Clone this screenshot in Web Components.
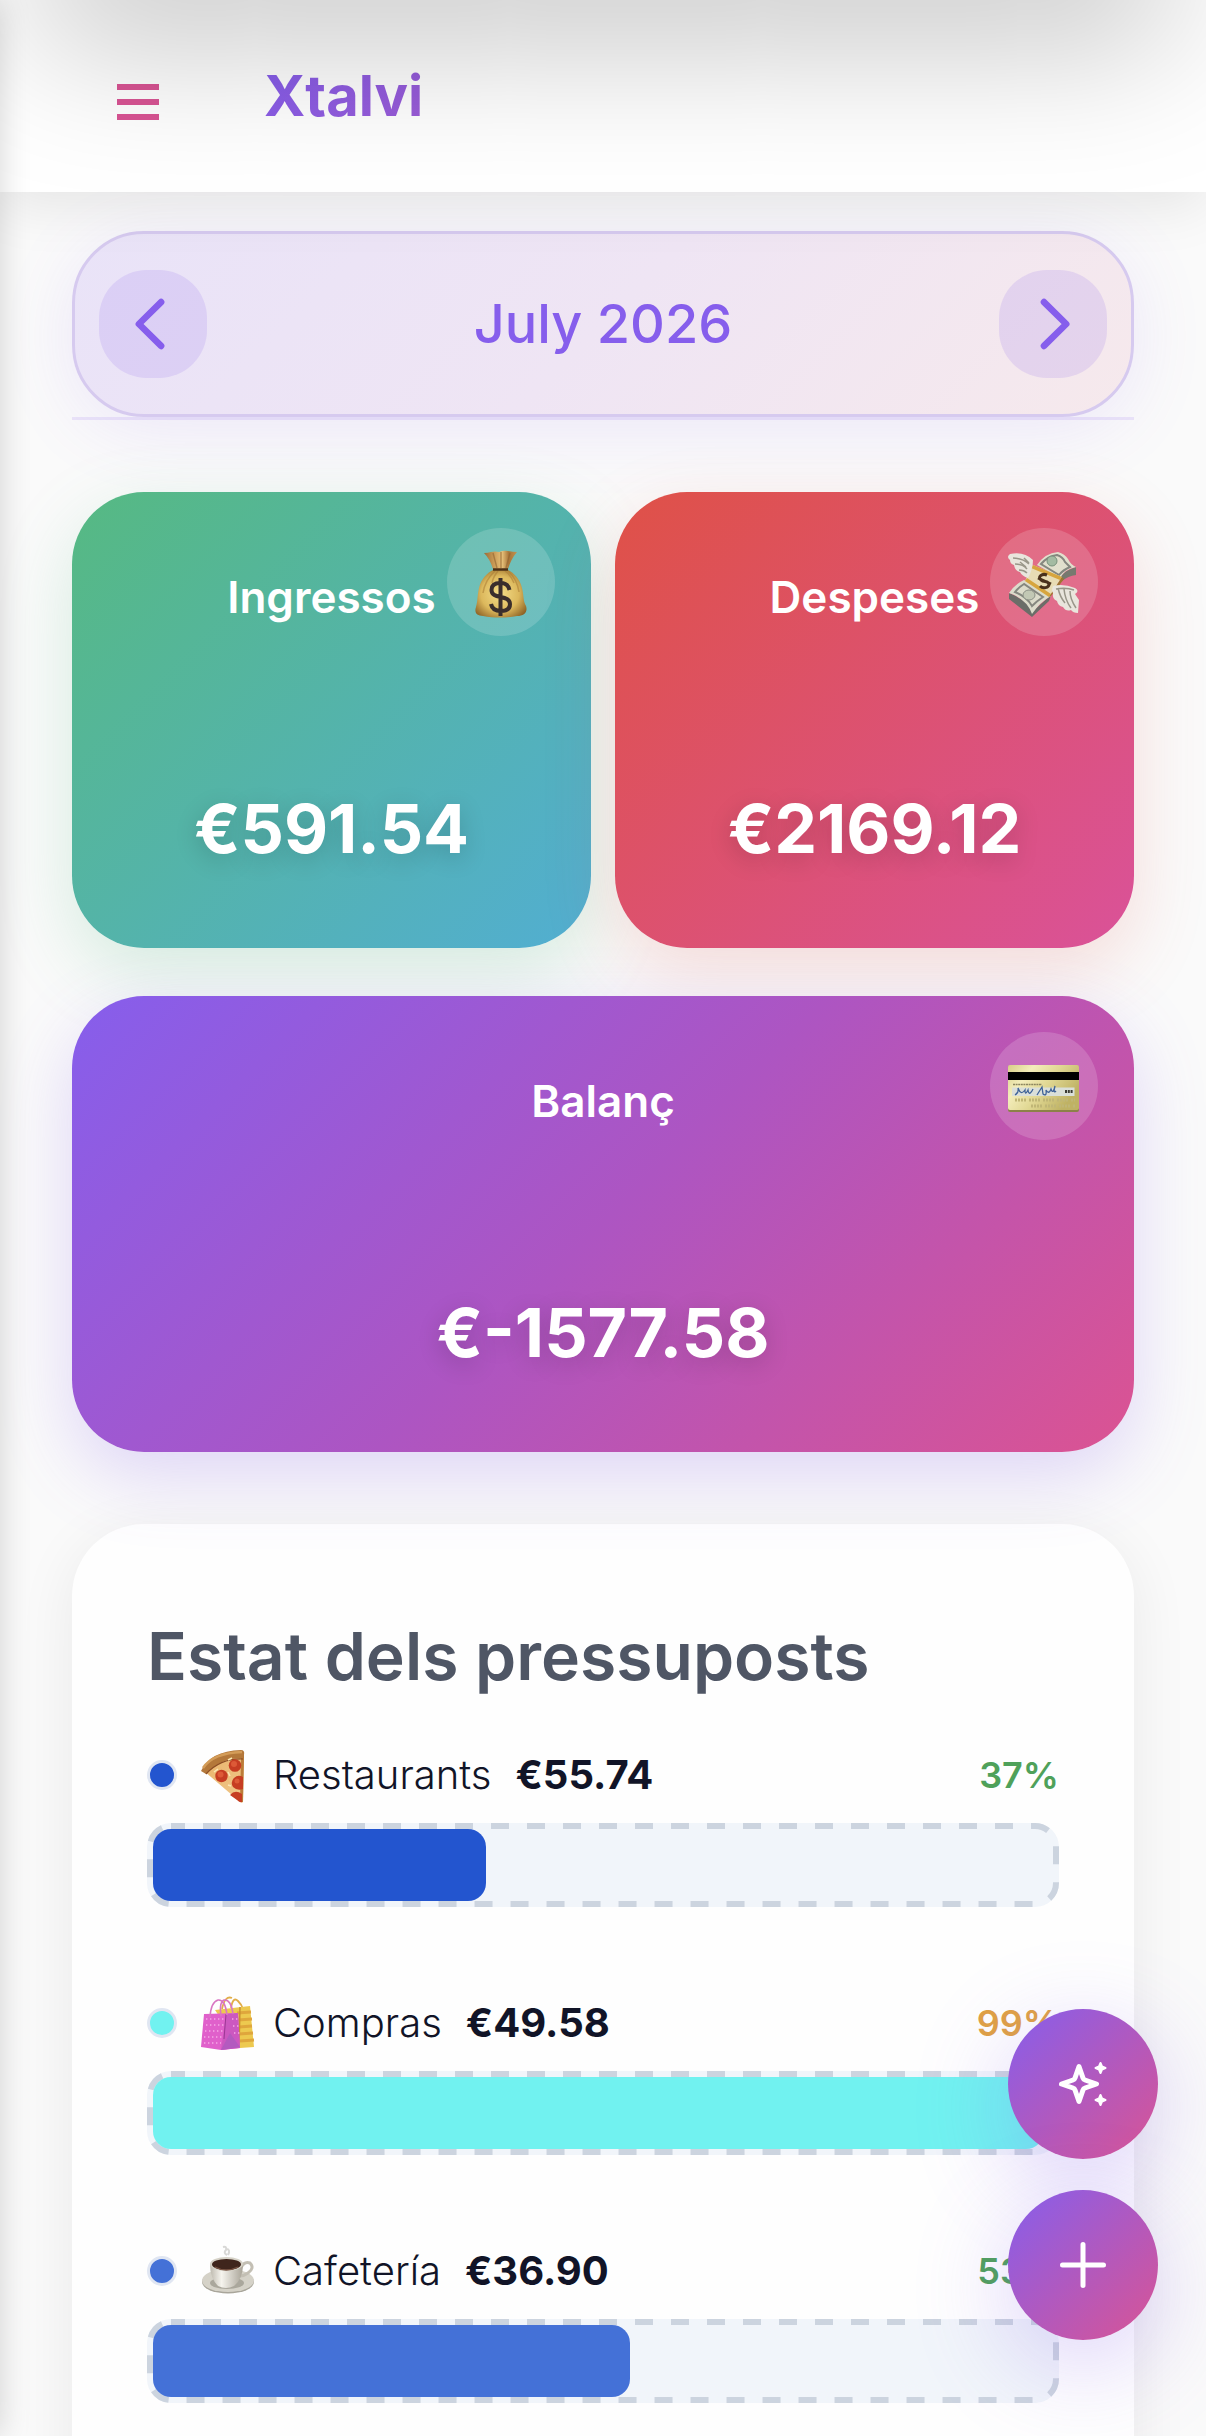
<!DOCTYPE html>
<html lang="ca">
<head>
<meta charset="utf-8">
<meta name="viewport" content="width=device-width, initial-scale=1">
<title>Xtalvi</title>
<style>
  :root {
    --purple: #865eec;
    --pink: #d95494;
    --brand: linear-gradient(135deg, #865eec, #d95494);
    --edge: 72px;
    --radius: 72px;
  }
  html, body { margin: 0; height: 100%; overflow: hidden; background: #fafafa; }
  body { font-family: Inter, "Liberation Sans", sans-serif; color: #111427; }
</style>
</head>
<body>
<app-shell>
  <app-header slot="header">Xtalvi</app-header>
  <month-nav>July 2026</month-nav>
  <summary-grid>
    <summary-card tone="income" icon="bag" label="Ingressos">€591.54</summary-card>
    <summary-card tone="expense" icon="wings" label="Despeses">€2169.12</summary-card>
    <summary-card tone="balance" icon="card" label="Balanç">€-1577.58</summary-card>
  </summary-grid>
  <budget-panel heading="Estat dels pressuposts">
    <budget-row icon="pizza" name="Restaurants" amount="€55.74" percent="37" fill="#2355cf"></budget-row>
    <budget-row icon="shopping" name="Compras" amount="€49.58" percent="99" fill="#71f2f0" warn></budget-row>
    <budget-row icon="coffee" name="Cafetería" amount="€36.90" percent="53" fill="#4471d7"></budget-row>
  </budget-panel>
  <fab-stack slot="actions"></fab-stack>
</app-shell>

<script>
const define = (name, render) => customElements.define(name, class extends HTMLElement {
  connectedCallback() {
    if (this.shadowRoot) return;
    const t = document.createElement('template');
    t.innerHTML = render(this);
    this.attachShadow({ mode: 'open' }).append(t.content.cloneNode(true));
  }
});

const ICONS = {
  bag: `<svg viewBox="0 0 108 108">
    <defs>
      <radialGradient id="b" cx=".48" cy=".5" r=".62"><stop offset="0" stop-color="#f3dc87"/><stop offset=".6" stop-color="#dcb85c"/><stop offset="1" stop-color="#8f6426"/></radialGradient>
      <linearGradient id="n"><stop offset="0" stop-color="#9a6b35"/><stop offset=".3" stop-color="#c99a55"/><stop offset=".55" stop-color="#e6c079"/><stop offset=".75" stop-color="#a87538"/><stop offset="1" stop-color="#c3934f"/></linearGradient>
    </defs>
    <path d="M37 25q4 0 7-1 4-1 8 0 5-2 9-1 5 1 9 1-6 7-9 17H46q-3-10-9-16z" fill="url(#n)"/>
    <path d="M46 25l4 15M54 24v16M63 25l-4 15" stroke="#8f6230" stroke-width="1.4" fill="none" opacity=".6"/>
    <path d="M46 42h15c6 3 12 9 14 18 2 8 1 13 4 18 2 6-2 10-9 10-11 2-23 2-34 0-6 0-9-3-7-9 2-7 1-10 3-19 2-9 8-15 14-18z" fill="url(#b)"/>
    <path d="M48 43q-10 9-12 22M51 43q-5 6-6 12M58 43q6 4 9 12M61 43q9 8 11 21" stroke="#a97b35" stroke-width="1.5" fill="none" opacity=".55"/>
    <path d="M46 41.500h15" stroke="#4c3017" stroke-width="2.500"/>
    <path d="M62.500 62c-1-5-4-7-9-7s-9 2-9 7c0 10 18 4 18.500 14 0 5-4 7-9 7s-9-2-10-7M53.500 50v38" fill="none" stroke="#3a2e2c" stroke-width="4"/>
  </svg>`,
  wings: `<svg viewBox="0 0 108 108">
    <path d="M19 65q20 8 23 19l19-17-2 6-17 16-23-18z" fill="#6b6d68"/>
    <path d="M34 52q-9 4-15 13 18 6 23 21 8-12 19-18z" fill="#dcdccb"/>
    <path d="M34 56q-5 3-9 8 12 5 17 14 5-5 11-9z" fill="none" stroke="#85877f" stroke-width="2"/>
    <ellipse cx="39" cy="67" rx="6" ry="5" fill="#c2c8b4" stroke="#8b9085"/>
    <path d="M86 39q-10 3-15 9l1 5q6-5 14-6z" fill="#77796f"/>
    <path d="M47 37q8-12 21-13 7 2 10 7 3 6 8 8-11 2-16 11z" fill="#e1e0cd"/>
    <path d="M51 36q7-8 16-9 6 2 8 7l5 5q-7 3-11 8z" fill="none" stroke="#85877f" stroke-width="2"/>
    <circle cx="62" cy="33" r="5" fill="#a3bba2" stroke="#78917b"/>
    <path d="M43 37l29 12-13 20-24-16z" fill="#e8dcb4"/>
    <path d="M43 37l29 12-2 3-29-12zM37 50l24 16-2 3-24-16z" fill="#d7a53e"/>
    <path d="M72 49l-13 20 2-1 13-17z" fill="#9c772e"/>
    <path d="M57 47c-5-2-10 2-6 5 3 3 6 0 8 4 0 4-6 5-9 2M48 50l13 6" fill="none" stroke="#49311c" stroke-width="3"/>
    <path d="M20 26q14-3 23 6 0 9-5 18-6-2-8-6-5-1-6-7-4-1-4-5-4-3 0-6z" fill="#e9e6dd"/>
    <path d="M23 30q10 0 16 6M25 36q8 0 12 5M29 42q5 0 8 3M34 30l5 5M30 34l6 5" fill="none" stroke="#999689" stroke-width="1.500"/>
    <path d="M63 58q10-3 22 2 5 3 0 6l4 6-1 13q-5 0-7-3-5 2-8-3-5-1-6-6-5-2-4-8-2-2 0-7z" fill="#e9e6dd"/>
    <path d="M68 60q2 9 7 15M74 61q1 11 7 19M80 63q0 8 6 17M66 61q10-2 18 1" fill="none" stroke="#999689" stroke-width="1.500"/>
  </svg>`,
  card: `<svg viewBox="0 0 108 108">
    <defs><linearGradient id="c" x2="1" y2=".5"><stop offset="0" stop-color="#d8cf88"/><stop offset=".3" stop-color="#f4edbb"/><stop offset=".6" stop-color="#e1d894"/><stop offset="1" stop-color="#bfb264"/></linearGradient></defs>
    <rect x="18" y="34" width="71" height="46" rx="2" fill="#8c8148"/>
    <rect x="18" y="33" width="71" height="45" rx="2" fill="url(#c)"/>
    <path fill="#000" d="M18 40h71v8H18z"/>
    <path fill="#dadfd9" d="M22 55.500h62.500v8.500H22z"/>
    <path d="M23 52.500h29" stroke="#8d8660" stroke-width="1.500" stroke-dasharray="2 .6"/>
    <path d="M25 63q4-2 3-7 3 8 7 2 0 6 3 0 1 7 5-1M47 63l5-8 1 7q4 3 3-4 3 5 5-1 2 6 4-3-2 8 1 5" fill="none" stroke="#3f6398" stroke-width="1.300"/>
    <path d="M75 59.500h8" stroke="#3b3b35" stroke-width="3" stroke-dasharray="2 .8"/>
    <path d="M25 68h60M41 74h44" stroke="#c0b676" stroke-width="3" stroke-dasharray="2 1 2 1 2 1 2 3"/>
  </svg>`,
  pizza: `<svg viewBox="0 0 54 60">
    <defs><linearGradient id="z" x1="0" y1="0" x2="1" y2="1"><stop offset="0" stop-color="#e9b36a"/><stop offset="1" stop-color="#f0c98c"/></linearGradient></defs>
    <path d="M3 26Q20 11 43 11l-1 46q-1 2-4-1z" fill="url(#z)"/>
    <path d="M40 13h3l-1 44-3 0z" fill="#bb7c38"/>
    <path d="M0 26Q9 6 40 5q4 0 3 5v3Q20 12 5 29z" fill="#b4783a"/>
    <path d="M2 23Q12 8 41 7" fill="none" stroke="#d39c58" stroke-width="2.500"/>
    <path d="M5 29Q20 13 42 14" fill="none" stroke="#8c4d24" stroke-width="1.200"/>
    <g fill="#c63d22"><circle cx="34" cy="20.500" r="6.300"/><circle cx="20.500" cy="31" r="6.200"/><path d="M42 32v12q-6 2-10-2-3-5 1-9 4-4 9-1zM41 49v8q-2 1-5-2l-7-5q5-6 12-1z"/></g>
    <g fill="#dd5a37"><circle cx="33" cy="19" r="3"/><circle cx="19.500" cy="29.500" r="3"/><circle cx="36" cy="36" r="2.500"/></g>
    <path d="M13 27l4-3M27 27l2 4M27 40l3 1M31 13l-4 2" stroke="#fbe6b4" stroke-width="1.500"/>
  </svg>`,
  shopping: `<svg viewBox="0 0 54 60">
    <path d="M21 16Q24 2 31 5M30 15Q32 3 37 8q4 4 5 8" fill="none" stroke="#e2ae49" stroke-width="1.800"/>
    <path d="M14 17l35-4 4 41-14 1z" fill="#edc94f"/>
    <path d="M36 20l14-1M37 27l14-1M38 34l13-1M38 41l14-1M39 48l14-1" stroke="#dfa63c" stroke-width="3"/>
    <path d="M39 14l-1 40" stroke="#c89030" stroke-width="1.500"/>
    <path d="M3 21l34-1 2 35-19 2-20-3z" fill="#e060cb"/>
    <path d="M25 21l12-1 2 35-19 2z" fill="#cc58c0"/>
    <path d="M29 40l10 14-19 3z" fill="#b35abf"/>
    <path d="M25 21l-2 25" stroke="#9c3794"/>
    <path d="M5 26h18M5 32h18M4 38h18M3 44h18M3 50h17M31 26h7M32 33h6M33 40h6" stroke="#f3a9e6" stroke-width="1.400" stroke-dasharray="1.400 2.600"/>
    <path d="M9 24Q10 9 17 7q7-1 9 15M20 23Q18 9 23 7q7-1 9 14" fill="none" stroke="#d977c2" stroke-width="1.600"/>
  </svg>`,
  coffee: `<svg viewBox="0 0 54 60">
    <defs><linearGradient id="s"><stop offset="0" stop-color="#bdb9ae"/><stop offset=".35" stop-color="#f6f4ee"/><stop offset="1" stop-color="#a9a498"/></linearGradient></defs>
    <ellipse cx="27" cy="41" rx="26" ry="11.500" fill="#a9a69b"/>
    <ellipse cx="27" cy="39.500" rx="26" ry="11.500" fill="#d5d2c8"/>
    <ellipse cx="26" cy="42" rx="17" ry="6" fill="#aaa79c"/>
    <path d="M40 27q3-7 9-5 5 5-2 10-4 3-8 3" fill="none" stroke="#c3bfb4" stroke-width="3"/>
    <path d="M9 23h33q0 15-9 22-8 4-16 0-8-8-8-22z" fill="url(#s)"/>
    <ellipse cx="25.500" cy="23" rx="16.500" ry="7" fill="#d6d2c7"/>
    <ellipse cx="25.500" cy="23.500" rx="14.500" ry="5.500" fill="#3f251c"/>
    <path d="M14 26q11 6 23 0" fill="none" stroke="#795444" stroke-width="1.300"/>
    <path d="M22 6q4-1 3 3-3 3 1 5M25 8q5 0 2 6" fill="none" stroke="#c8c8c4" stroke-width="2" opacity=".7"/>
  </svg>`
};

/* Page frame: the closed drawer and the sheet above cast shadows over the content. */
define('app-shell', () => `
<style>
  :host { display: flex; flex-direction: column; height: 100vh; position: relative; overflow: hidden; }
  main { flex: 1; min-height: 0; overflow: hidden; padding: 39px var(--edge) 0; display: flex; flex-direction: column; gap: 72px; }
  .shade { position: absolute; z-index: 5; pointer-events: none; }
  .drawer { left: -100px; top: 0; bottom: 0; width: 100px; box-shadow: 0 0 30px rgba(0,0,0,.16); }
  .sheet { left: 0; right: 0; top: -200px; height: 200px; box-shadow: 0 75px 150px -36px rgba(0,0,0,.25); }
</style>
<slot name="header"></slot>
<main><slot></slot></main>
<div class="shade drawer"></div><div class="shade sheet"></div>
<slot name="actions"></slot>`);

define('app-header', () => `
<style>
  :host { display: block; position: relative; z-index: 2; background: #fff; box-shadow: 0 12px 54px rgba(0,0,0,.09); }
  header { display: flex; align-items: center; gap: 105px; padding: 60px 117px; }
  button { all: unset; display: block; cursor: pointer; height: 48px; }
  svg { display: block; width: 42px; height: 48px; }
  h1 { flex: 1; margin: 0; font-size: 56px; line-height: 72px; font-weight: 700; color: transparent;
       background: var(--brand); background-clip: text; -webkit-background-clip: text; }
</style>
<header>
  <button type="button" aria-label="Menú"><svg viewBox="0 0 42 48" fill="#d95494"><path d="M0 12h42v6H0zM0 27h42v6H0zM0 42h42v6H0z"/></svg></button>
  <h1><slot></slot></h1>
</header>`);

define('month-nav', () => `
<style>
  :host { display: block; border-bottom: 3px solid #ebe5f8; }
  nav { display: flex; align-items: center; justify-content: space-between; padding: 36px 24px; border: 3px solid #d6caef;
        border-radius: var(--radius); background: linear-gradient(135deg, #e9e3f8, #efe5f4 50%, #f6e9ec);
        box-shadow: 0 12px 72px rgba(134,94,236,.12); color: var(--purple); }
  button { all: unset; box-sizing: border-box; width: 108px; height: 108px; padding: 18px; border-radius: 48px; background: rgba(134,94,236,.15); cursor: pointer; }
  svg { display: block; width: 72px; height: 72px; fill: none; stroke: currentColor; stroke-width: 2.2; stroke-linecap: round; stroke-linejoin: round; }
  h2 { margin: 0; font-size: 54px; line-height: 72px; font-weight: 500; }
</style>
<nav>
  <button type="button" aria-label="Mes anterior"><svg viewBox="0 0 24 24"><path d="M14.700 4.700 7.300 12l7.400 7.300"/></svg></button>
  <h2><slot></slot></h2>
  <button type="button" aria-label="Mes següent"><svg viewBox="0 0 24 24"><path d="M9 4.700 16.400 12 9 19.300"/></svg></button>
</nav>`);

define('summary-grid', () => `
<style>:host { display: grid; grid-template-columns: 1fr 1fr; gap: 48px 24px; }</style><slot></slot>`);

define('summary-card', el => `
<style>
  :host { display: block; position: relative; border-radius: var(--radius); color: #fff; }
  :host([tone=income]) { background: linear-gradient(135deg, #56b982, #52aed2); box-shadow: 0 24px 72px rgba(86,185,130,.22); }
  :host([tone=expense]) { background: linear-gradient(135deg, #df5147, #da5299); box-shadow: 0 24px 72px rgba(223,81,71,.18); }
  :host([tone=balance]) { grid-column: 1 / -1; background: linear-gradient(135deg, #865eec, #ad55c2 50%, #db5392); box-shadow: 0 24px 72px rgba(134,94,236,.23); }
  article { display: flex; flex-direction: column; align-items: center; gap: 150px; padding: 72px; }
  h3 { margin: 0; font-size: 44px; line-height: 66px; font-weight: 600; }
  p { margin: 0; font-size: 68px; line-height: 96px; font-weight: 700; text-shadow: 0 6px 24px rgba(0,0,0,.18); }
  .badge { position: absolute; top: 36px; right: 36px; width: 108px; height: 108px; border-radius: 50%; background: rgba(255,255,255,.16); }
  svg { display: block; width: 100%; height: 100%; }
</style>
<article><h3>${el.getAttribute('label')}</h3><p><slot></slot></p></article>
<div class="badge" aria-hidden="true">${ICONS[el.getAttribute('icon')]}</div>`);

define('budget-panel', el => `
<style>
  :host { display: block; flex: none; box-sizing: border-box; padding: 75px 75px 160px; border-radius: var(--radius); background: #fefefe; box-shadow: 0 12px 60px rgba(0,0,0,.07); }
  h2 { margin: 0 0 32px; font-size: 66px; line-height: 114px; font-weight: 600; color: #4f5665; }
  .rows { display: flex; flex-direction: column; gap: 86px; }
</style>
<h2>${el.getAttribute('heading')}</h2><div class="rows"><slot></slot></div>`);

define('budget-row', el => {
  const a = n => el.getAttribute(n);
  return `
<style>
  :host { display: flex; flex-direction: column; gap: 18px; }
  .info { display: flex; align-items: center; gap: 24px; height: 60px; font-size: 40px; line-height: 60px; }
  .dot { box-sizing: border-box; width: 30px; height: 30px; border: 3px solid #e0e6f2; border-radius: 50%; background: ${a('fill')}; }
  .name { display: flex; gap: 18px; font-weight: 300; }
  .name svg { width: 54px; height: 60px; }
  b { font-weight: 700; }
  .pct { margin-left: auto; font-size: 36px; font-weight: 600; color: #4fa15a; }
  :host([warn]) .pct { color: #e0a144; }
  .bar { position: relative; box-sizing: border-box; height: 84px; padding: 6px; border-radius: 24px; background: #f1f5fa; }
  .bar svg { position: absolute; inset: 0; width: 100%; height: 100%; }
  rect { x: 3px; y: 3px; width: calc(100% - 6px); height: 78px; rx: 21px; fill: none; stroke: #ccd4df; stroke-width: 6px; stroke-dasharray: 18 18; stroke-dashoffset: 4px; }
  .fill { position: relative; height: 72px; width: ${a('percent')}%; border-radius: 18px; background: ${a('fill')}; }
</style>
<div class="info"><span class="dot"></span><span class="name">${ICONS[a('icon')]}<span>${a('name')}</span></span><b>${a('amount')}</b><span class="pct">${a('percent')}%</span></div>
<div class="bar" role="progressbar" aria-label="${a('name')}" aria-valuemin="0" aria-valuemax="100" aria-valuenow="${a('percent')}"><svg aria-hidden="true"><rect/></svg><div class="fill"></div></div>`;
});

define('fab-stack', () => `
<style>
  :host { position: absolute; z-index: 4; right: 48px; bottom: 96px; display: flex; flex-direction: column; gap: 31px; }
  button { all: unset; box-sizing: border-box; width: 150px; height: 150px; padding: 39px; border-radius: 50%; background: var(--brand); box-shadow: 0 24px 96px rgba(134,94,236,.28); cursor: pointer; }
  svg { display: block; width: 72px; height: 72px; fill: none; stroke: #fff; stroke-linecap: round; stroke-linejoin: round; }
</style>
<button type="button" aria-label="Assistent"><svg viewBox="0 0 72 72"><path stroke-width="5" d="M32 18.500l4 11.500q.5 1.500 2 2l11.500 4-11.500 4q-1.500.5-2 2l-4 11.500-4-11.500q-.5-1.500-2-2l-11.500-4 11.500-4q1.500-.5 2-2z"/><path fill="#fff" stroke-width="2" d="M53.500 15l1.500 3.500 3.500 1.500-3.500 1.500-1.500 3.500-1.500-3.500-3.500-1.500 3.500-1.500zM53.500 47l1.500 3.500 3.500 1.500-3.500 1.500-1.500 3.500-1.500-3.500-3.500-1.500 3.500-1.500z"/></svg></button>
<button type="button" aria-label="Afegir"><svg viewBox="0 0 72 72"><path stroke-width="5" d="M36 15.500v41M15.500 36h41"/></svg></button>`);
</script>
</body>
</html>
